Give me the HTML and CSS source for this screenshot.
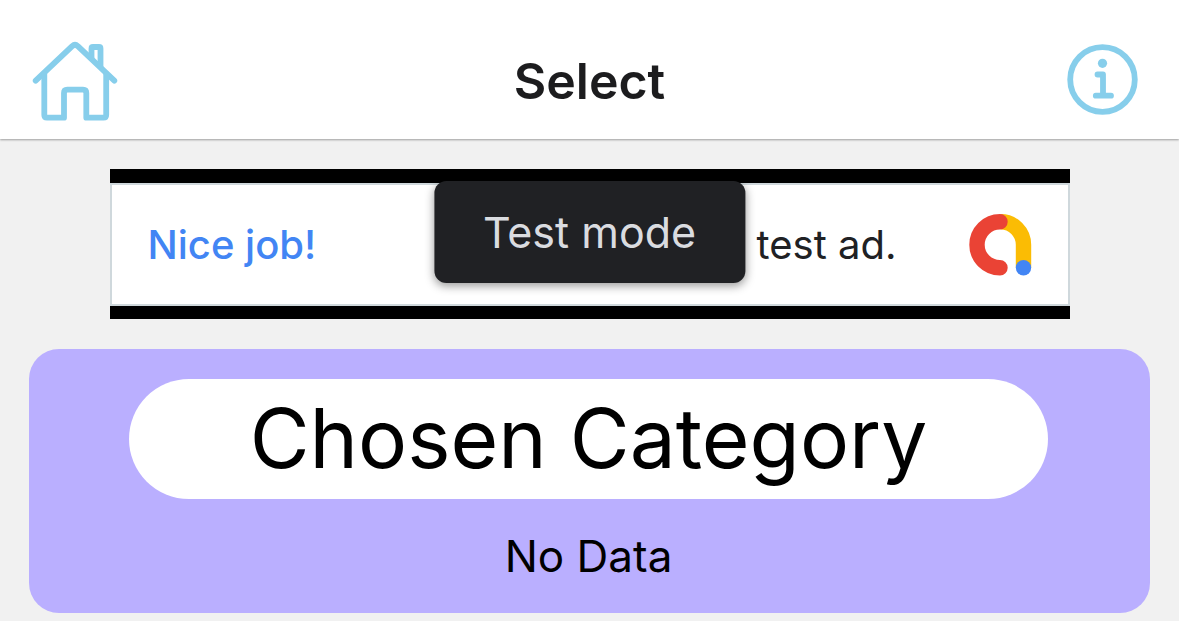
FILE: index.html
```html
<!DOCTYPE html>
<html lang="en">
<head>
<meta charset="utf-8">
<meta name="viewport" content="width=device-width, initial-scale=1">
<title>Select</title>
<link rel="stylesheet" href="styles.css">
</head>
<body>
<header class="header">
  <button class="icon-button" type="button" aria-label="Home">
    <svg class="icon" width="86" height="82" viewBox="0 0 86 82" aria-hidden="true">
      <path d="M3.7 40.7 40.2 6.1Q43 3.6 45.8 6.1L82.3 40.7"/>
      <path d="M12.3 34V75Q12.3 77.7 15 77.7H32V53Q32 49.7 35.3 49.7H51Q54.3 49.7 54.3 53V77.7H71.5Q74.2 77.7 74.2 75V34"/>
      <path d="M59.5 18V8.5Q59.5 7 61 7H67Q68.5 7 68.5 8.5V26"/>
    </svg>
  </button>
  <h1 class="title">Select</h1>
  <button class="icon-button info-button" type="button" aria-label="Information">
    <svg class="icon" width="72" height="75" viewBox="0 0 72 75" aria-hidden="true">
      <circle cx="35.5" cy="35.5" r="32.3"/>
      <circle class="dot" cx="35.500" cy="19.3" r="4.6"/>
      <path d="M30.500 30.500H36V51.500M28.800 51.700H44"/>
    </svg>
  </button>
</header>
<main class="content">
  <section class="ad" aria-label="Advertisement">
    <div class="ad-body">
      <span class="ad-praise">Nice job!</span>
      <span class="ad-text">test ad.</span>
      <svg width="64" height="64" viewBox="0 0 64 64" fill="none" stroke-width="15.4" aria-hidden="true">
        <path stroke="#fbbc04" d="M32.5 8.700A23 23 0 0 1 55.5 31.700V54.7"/>
        <path stroke="#ea4335" stroke-linecap="round" d="M32 8.700A23 23 0 0 0 32 54.7"/>
        <circle cx="55.5" cy="54.7" r="7.7" fill="#4285f4" stroke="none"/>
      </svg>
    </div>
    <div class="toast" role="status">Test mode</div>
  </section>
  <section class="card">
    <h2 class="category">Chosen Category</h2>
    <p class="empty">No Data</p>
  </section>
</main>
</body>
</html>
```
FILE: styles.css
```css
* {
  box-sizing: border-box;
}

body {
  margin: 0;
  background: #f1f1f1;
  color: #000;
  font-family: Inter, "Liberation Sans", sans-serif;
}

.header {
  display: grid;
  grid-template-columns: 1fr auto 1fr;
  align-items: center;
  padding: 40px 32px 17px;
  background: #fff;
  box-shadow: 0 1px 2px rgba(0, 0, 0, 0.35);
}

.icon-button {
  justify-self: start;
  padding: 0;
  border: 0;
  background: none;
  cursor: pointer;
}

.info-button {
  justify-self: end;
  margin-right: 8px;
}

.icon {
  display: block;
  fill: none;
  stroke: #87ceeb;
  stroke-width: 5.8;
  stroke-linecap: round;
  stroke-linejoin: round;
}

.icon .dot {
  fill: #87ceeb;
  stroke: none;
}

.title {
  margin: 0;
  color: #1c1c1e;
  font-size: 50px;
  font-weight: 600;
  line-height: 60px;
}

.content {
  display: flex;
  flex-direction: column;
  gap: 30px;
  padding: 30px 29px 8px;
}

.ad {
  position: relative;
  width: 100%;
  max-width: 960px;
  margin: 0 auto;
  padding: 14px 0 13px;
  background: #000;
}

.ad-body {
  display: flex;
  align-items: center;
  padding: 28px 36px 27px;
  border: 2px solid #cfd8dc;
  background: #fff;
  font-size: 40px;
  line-height: 62px;
}

.ad-praise {
  flex: 1;
  color: #4285f4;
  font-weight: 500;
}

.ad-text {
  margin-right: 71px;
  color: #202124;
}

.toast {
  position: absolute;
  top: 12px;
  left: 50%;
  transform: translateX(-50%);
  padding: 20px 49px;
  border-radius: 12px;
  background: #202124;
  box-shadow: 0 3px 10px rgba(0, 0, 0, 0.4);
  color: #dadce0;
  font-size: 43px;
  line-height: 62px;
  white-space: nowrap;
}

.card {
  padding: 30px 102px 30px 100px;
  border-radius: 30px;
  background: #baafff;
  text-align: center;
}

.category {
  margin: 0;
  border-radius: 60px;
  background: #fff;
  font-size: 82px;
  font-weight: 400;
  line-height: 120px;
}

.empty {
  margin: 30px 0 0;
  font-size: 44px;
  line-height: 54px;
}
```
